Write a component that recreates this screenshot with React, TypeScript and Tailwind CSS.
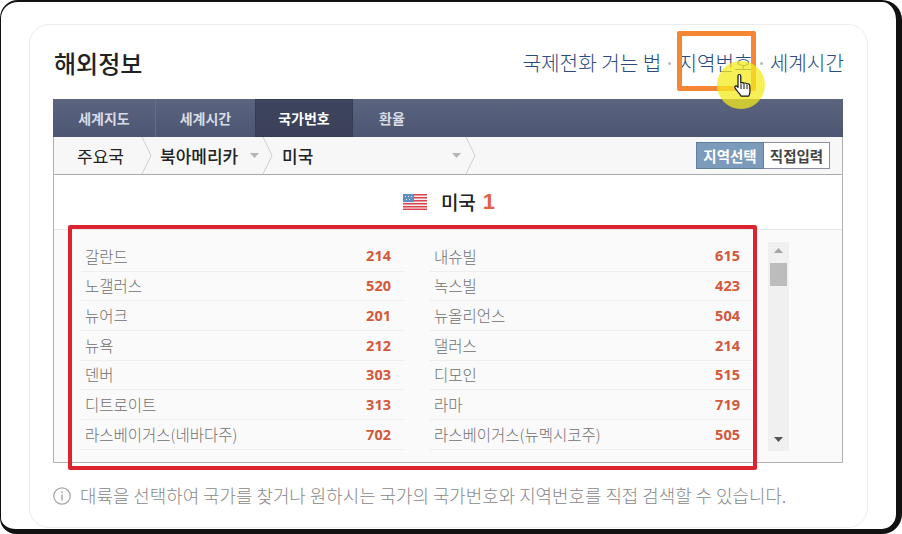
const FONT = 'font-["Noto_Sans_CJK_KR","Noto_Sans",sans-serif]';

const left: [string, string][] = [
  ["갈란드", "214"],
  ["노갤러스", "520"],
  ["뉴어크", "201"],
  ["뉴욕", "212"],
  ["덴버", "303"],
  ["디트로이트", "313"],
  ["라스베이거스(네바다주)", "702"],
];
const right: [string, string][] = [
  ["내슈빌", "615"],
  ["녹스빌", "423"],
  ["뉴올리언스", "504"],
  ["댈러스", "214"],
  ["디모인", "515"],
  ["라마", "719"],
  ["라스베이거스(뉴멕시코주)", "505"],
];

function Column({ rows }: { rows: [string, string][] }) {
  return (
    <ul className="w-[324px]">
      {rows.map(([name, code]) => (
        <li
          key={name}
          className="flex h-[29.7px] items-center justify-between border-b border-[#eeeeee] pl-1 pr-[14px]"
        >
          <span className="text-[15.5px] font-light text-[#707070]">{name}</span>
          <span className='font-["Noto_Sans",sans-serif] text-[14.5px] font-bold text-[#d4583a]'>{code}</span>
        </li>
      ))}
    </ul>
  );
}

function Chevron() {
  return (
    <svg width="11" height="37" viewBox="0 0 11 37" className="shrink-0">
      <path d="M1 0 L10 18.5 L1 37" fill="none" stroke="#cfcfcf" strokeWidth="1" />
    </svg>
  );
}

function Caret({ color = "#b5b5b5" }: { color?: string }) {
  return (
    <svg width="9" height="5" viewBox="0 0 9 5" className="shrink-0">
      <path d="M0 0H9L4.5 5Z" fill={color} />
    </svg>
  );
}

function Flag() {
  return (
    <svg width="24" height="16" viewBox="0 0 24 16" className="shrink-0">
      <rect width="24" height="16" fill="#f4f0f0" />
      {[0, 3, 6, 9, 12, 14.6].map((y) => (
        <rect key={y} y={y} width="24" height="1.5" fill="#d9434e" />
      ))}
      <rect width="11" height="8" fill="#5f8fc4" />
      <g fill="#e8eef7">
        <rect x="2" y="2" width="1" height="1" />
        <rect x="5" y="2" width="1" height="1" />
        <rect x="8" y="2" width="1" height="1" />
        <rect x="3" y="5" width="1" height="1" />
        <rect x="6" y="5" width="1" height="1" />
      </g>
    </svg>
  );
}

export default function App() {
  return (
    <div className={`relative h-[534px] w-[902px] overflow-hidden bg-white ${FONT}`}>
      <div className="h-full w-full rounded-tl-[18px] rounded-tr-[20px] rounded-br-[20px] rounded-bl-[16px] border-t-2 border-r-[6px] border-b-[5px] border-l border-[#111111] bg-white pt-[22px] pr-[28px] pb-px pl-[28px]">
        <div className="h-[504px] rounded-[20px] border border-[#ececec] px-[23px]">
          <div className="flex h-[74px] items-center justify-between pt-[1px]">
            <h1 className="ml-px text-[24px] font-medium text-[#222222]">해외정보</h1>
            <nav className="mt-[2px] flex items-center gap-[7px] text-[20.2px] font-light text-[#2a4a80]">
              <span>국제전화 거는 법</span>
              <span className="h-[3px] w-[3px] rounded-full bg-[#bbbbbb]" />
              <span>지역번호</span>
              <span className="h-[3px] w-[3px] rounded-full bg-[#bbbbbb]" />
              <span>세계시간</span>
            </nav>
          </div>

          <div className="flex h-[364px] w-[790px] flex-col border border-t-0 border-[#b0b0b0]">
            <div className="-mx-px flex h-[38px] shrink-0 items-stretch bg-gradient-to-b from-[#5b6580] to-[#4c5672] text-[14px] font-bold text-[#d9dce4]">
              <div className="flex w-[102px] items-center justify-center">세계지도</div>
              <div className="flex w-[100px] items-center justify-center border-l border-[#646e88]">세계시간</div>
              <div className="flex w-[98px] items-center justify-center border border-[#363d52] bg-gradient-to-b from-[#3d445d] to-[#3a4158] text-white">
                국가번호
              </div>
              <div className="flex w-[78px] items-center justify-center">환율</div>
            </div>

            <div className="flex h-[38px] shrink-0 items-center border-b border-[#aaaaaa] bg-[#f7f7f7] text-[17px] text-[#222222]">
              <span className="w-[87px] pl-[23px]">주요국</span>
              <Chevron />
              <span className="ml-[8px] w-[78px] font-medium whitespace-nowrap">북아메리카</span>
              <span className="ml-3 mr-[3px]">
                <Caret />
              </span>
              <Chevron />
              <span className="ml-[9px] w-[170px] font-medium">미국</span>
              <Caret />
              <span className="ml-[4px]">
                <Chevron />
              </span>
              <div className="ml-[220px] flex h-[27px] text-[14.5px] font-bold">
                <span className="flex w-[68px] items-center justify-center border border-[#5f7f9f] bg-[#7c9bbb] text-white">
                  지역선택
                </span>
                <span className="flex w-[66px] items-center justify-center border border-l-0 border-[#8a8f9a] bg-white text-[#444444]">
                  직접입력
                </span>
              </div>
            </div>

            <div className="flex h-[55px] shrink-0 items-center justify-center gap-[14px] border-b border-[#e8e8e8] pl-[2px]">
              <Flag />
              <div className="flex items-center gap-[7px]">
                <span className="text-[19px] font-medium text-[#222222]">미국</span>
                <span className='font-["Liberation_Sans",sans-serif] text-[22px] leading-none font-bold text-[#e0603f]'>1</span>
              </div>
            </div>

            <div className="flex flex-1 bg-[#fafafa] pt-3 pl-[27px]">
              <Column rows={left} />
              <div className="w-[25px]" />
              <Column rows={right} />
              <div className="ml-[14px] flex h-[209px] w-[21px] flex-col items-center bg-[#f0f0f0] px-[2px] pt-[6px]">
                <svg width="9" height="5" viewBox="0 0 9 5" className="mb-[10px] shrink-0">
                  <path d="M0 5H9L4.5 0Z" fill="#a5a5a5" />
                </svg>
                <div className="h-[23px] w-full bg-[#bcbcbc]" />
                <div className="flex-1" />
                <span className="mb-[9px]">
                  <Caret color="#555555" />
                </span>
              </div>
            </div>
          </div>

          <p className="mt-[24px] flex items-center gap-[9px] text-[17.9px] leading-none font-light whitespace-nowrap text-[#888888]">
            <svg width="18" height="18" viewBox="0 0 18 18" className="shrink-0">
              <circle cx="9" cy="9" r="8.2" fill="none" stroke="#a5a5a5" strokeWidth="1.2" />
              <rect x="8.3" y="7.5" width="1.5" height="6" fill="#a5a5a5" />
              <rect x="8.3" y="4.5" width="1.5" height="1.7" fill="#a5a5a5" />
            </svg>
            대륙을 선택하여 국가를 찾거나 원하시는 국가의 국가번호와 지역번호를 직접 검색할 수 있습니다.
          </p>
        </div>
      </div>

      {/* annotation overlays */}
      <div className="absolute top-[225px] left-[68px] h-[245px] w-[689px] rounded-[2px] border-4 border-[#dc2430]" />
      <div className="absolute top-[31px] left-[677px] h-[60px] w-[79px] rounded-[2px] border-[5px] border-[#f58634]" />
      <div className="absolute top-[61px] left-[717px] h-12 w-12 rounded-full bg-[#f4ea1e]/75" />
      <svg width="22" height="26" viewBox="0 0 22 26" className="absolute top-[73px] left-[733px]">
        <path
          d="M6 1.5c1 0 1.8.8 1.8 1.8V10c.3-.5 2.6-.7 3 .4.5-.6 2.5-.6 3 .6.6-.5 2.6-.3 2.9 1.2l.3 6c0 2-.6 3.6-1.4 5H8.2c-.7-1.4-2.4-3.2-4-5.2-.9-1.100-2-2.500-2.300-3.500-.3-1.300 1.200-2 2.200-1.200l.9 1V3.300c0-1 .3-1.800 1-1.800Z"
          fill="#ffffff"
          stroke="#111111"
          strokeWidth="1.200"
          strokeLinejoin="round"
        />
        <path d="M8 11v5M11 11v5M14 12v4" stroke="#111111" strokeWidth="1" fill="none" />
      </svg>
    </div>
  );
}
